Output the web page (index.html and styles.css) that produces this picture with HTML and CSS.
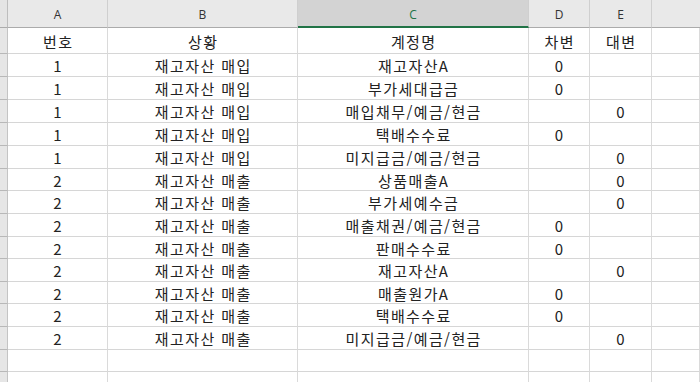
FILE: index.html
```html
<!DOCTYPE html>
<html lang="ko">
<head>
<meta charset="utf-8">
<title>Sheet</title>
<link rel="stylesheet" href="styles.css">
</head>
<body>
<div class="sheet">
  <div class="ch corner"></div>
  <div class="ch">A</div>
  <div class="ch">B</div>
  <div class="ch sel">C</div>
  <div class="ch">D</div>
  <div class="ch">E</div>
  <div class="ch last"></div>

  <div class="rh"></div><div class="c">번호</div><div class="c">상황</div><div class="c">계정명</div><div class="c">차변</div><div class="c">대변</div><div class="c"></div>
  <div class="rh"></div><div class="c">1</div><div class="c">재고자산 매입</div><div class="c">재고자산A</div><div class="c">0</div><div class="c"></div><div class="c"></div>
  <div class="rh"></div><div class="c">1</div><div class="c">재고자산 매입</div><div class="c">부가세대급금</div><div class="c">0</div><div class="c"></div><div class="c"></div>
  <div class="rh"></div><div class="c">1</div><div class="c">재고자산 매입</div><div class="c">매입채무/예금/현금</div><div class="c"></div><div class="c">0</div><div class="c"></div>
  <div class="rh"></div><div class="c">1</div><div class="c">재고자산 매입</div><div class="c">택배수수료</div><div class="c">0</div><div class="c"></div><div class="c"></div>
  <div class="rh"></div><div class="c">1</div><div class="c">재고자산 매입</div><div class="c">미지급금/예금/현금</div><div class="c"></div><div class="c">0</div><div class="c"></div>
  <div class="rh"></div><div class="c">2</div><div class="c">재고자산 매출</div><div class="c">상품매출A</div><div class="c"></div><div class="c">0</div><div class="c"></div>
  <div class="rh"></div><div class="c">2</div><div class="c">재고자산 매출</div><div class="c">부가세예수금</div><div class="c"></div><div class="c">0</div><div class="c"></div>
  <div class="rh"></div><div class="c">2</div><div class="c">재고자산 매출</div><div class="c">매출채권/예금/현금</div><div class="c">0</div><div class="c"></div><div class="c"></div>
  <div class="rh"></div><div class="c">2</div><div class="c">재고자산 매출</div><div class="c">판매수수료</div><div class="c">0</div><div class="c"></div><div class="c"></div>
  <div class="rh"></div><div class="c">2</div><div class="c">재고자산 매출</div><div class="c">재고자산A</div><div class="c"></div><div class="c">0</div><div class="c"></div>
  <div class="rh"></div><div class="c">2</div><div class="c">재고자산 매출</div><div class="c">매출원가A</div><div class="c">0</div><div class="c"></div><div class="c"></div>
  <div class="rh"></div><div class="c">2</div><div class="c">재고자산 매출</div><div class="c">택배수수료</div><div class="c">0</div><div class="c"></div><div class="c"></div>
  <div class="rh"></div><div class="c">2</div><div class="c">재고자산 매출</div><div class="c">미지급금/예금/현금</div><div class="c"></div><div class="c">0</div><div class="c"></div>
  <div class="rh"></div><div class="c"></div><div class="c"></div><div class="c"></div><div class="c"></div><div class="c"></div><div class="c"></div>
  <div class="rh"></div><div class="c"></div><div class="c"></div><div class="c"></div><div class="c"></div><div class="c"></div><div class="c"></div>
</div>
</body>
</html>
```

FILE: styles.css
```css
* { box-sizing: border-box; }
html, body { margin: 0; padding: 0; background: #ffffff; }
body { width: 700px; height: 382px; overflow: hidden; }

.sheet {
  display: grid;
  grid-template-columns: 8px 100px 190px 231px 61px 62px 48px;
  grid-template-rows: 28px 26px 23px 23px 23px 23px 23px 22px 23px 23px 22px 23px 22px 23px 23px 22px 22px;
  font-family: "Noto Sans CJK KR", "Noto Sans", sans-serif;
  font-size: 15px;
  letter-spacing: 1.4px;
  color: #222222;
}

.ch {
  background: #e9e9e9;
  border-bottom: 1px solid #ababab;
  border-right: 1px solid #cfcfcf;
  font-family: "Open Sans", "Noto Sans", sans-serif;
  font-size: 12px;
  letter-spacing: 0;
  color: #333333;
  display: flex;
  align-items: center;
  justify-content: center;
  padding-top: 2px;
}
.ch.corner { background: #e4e4e4; border-right: 1px solid #bdbdbd; }
.ch.last { border-right: none; }
.ch.sel {
  background: #d3d3d3;
  color: #217346;
  border-bottom: 2px solid #217346;
  padding-top: 3px;
}

.rh {
  background: #e6e6e6;
  border-right: 1px solid #c4c4c4;
  border-bottom: 1px solid #b8b8b8;
}

.c {
  border-right: 1px solid #dadada;
  border-bottom: 1px solid #d6d6d6;
  display: flex;
  align-items: center;
  justify-content: center;
  white-space: nowrap;
  line-height: 1;
  padding-top: 1px;
  padding-left: 1.4px;
}
```
